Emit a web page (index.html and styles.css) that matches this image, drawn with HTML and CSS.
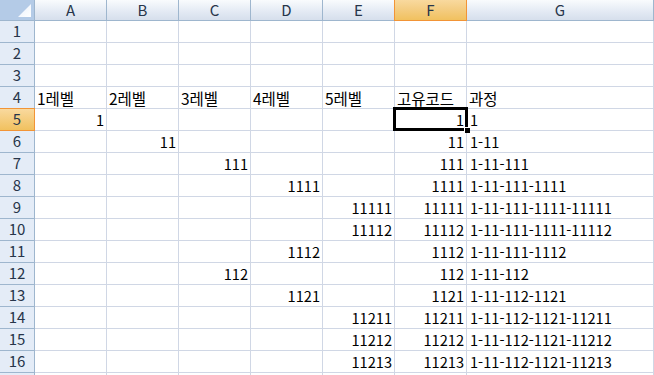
FILE: index.html
```html
<!DOCTYPE html>
<html lang="ko">
<head>
<meta charset="utf-8">
<link rel="stylesheet" href="styles.css">
</head>
<body>
<div class="wrap">
  <div class="sheet">
    <div class="corner"><span class="tri"></span></div>
    <div class="ch">A</div><div class="ch">B</div><div class="ch">C</div><div class="ch">D</div><div class="ch">E</div><div class="ch sel">F</div><div class="ch">G</div>

    <div class="rh">1</div><div class="c"></div><div class="c"></div><div class="c"></div><div class="c"></div><div class="c"></div><div class="c"></div><div class="c"></div>
    <div class="rh">2</div><div class="c"></div><div class="c"></div><div class="c"></div><div class="c"></div><div class="c"></div><div class="c"></div><div class="c"></div>
    <div class="rh">3</div><div class="c"></div><div class="c"></div><div class="c"></div><div class="c"></div><div class="c"></div><div class="c"></div><div class="c"></div>
    <div class="rh">4</div><div class="c k">1레벨</div><div class="c k">2레벨</div><div class="c k">3레벨</div><div class="c k">4레벨</div><div class="c k">5레벨</div><div class="c k">고유코드</div><div class="c k">과정</div>
    <div class="rh sel">5</div><div class="c n">1</div><div class="c"></div><div class="c"></div><div class="c"></div><div class="c"></div><div class="c n">1</div><div class="c">1</div>
    <div class="rh">6</div><div class="c"></div><div class="c n">11</div><div class="c"></div><div class="c"></div><div class="c"></div><div class="c n">11</div><div class="c">1-11</div>
    <div class="rh">7</div><div class="c"></div><div class="c"></div><div class="c n">111</div><div class="c"></div><div class="c"></div><div class="c n">111</div><div class="c">1-11-111</div>
    <div class="rh">8</div><div class="c"></div><div class="c"></div><div class="c"></div><div class="c n">1111</div><div class="c"></div><div class="c n">1111</div><div class="c">1-11-111-1111</div>
    <div class="rh">9</div><div class="c"></div><div class="c"></div><div class="c"></div><div class="c"></div><div class="c n">11111</div><div class="c n">11111</div><div class="c">1-11-111-1111-11111</div>
    <div class="rh">10</div><div class="c"></div><div class="c"></div><div class="c"></div><div class="c"></div><div class="c n">11112</div><div class="c n">11112</div><div class="c">1-11-111-1111-11112</div>
    <div class="rh">11</div><div class="c"></div><div class="c"></div><div class="c"></div><div class="c n">1112</div><div class="c"></div><div class="c n">1112</div><div class="c">1-11-111-1112</div>
    <div class="rh">12</div><div class="c"></div><div class="c"></div><div class="c n">112</div><div class="c"></div><div class="c"></div><div class="c n">112</div><div class="c">1-11-112</div>
    <div class="rh">13</div><div class="c"></div><div class="c"></div><div class="c"></div><div class="c n">1121</div><div class="c"></div><div class="c n">1121</div><div class="c">1-11-112-1121</div>
    <div class="rh">14</div><div class="c"></div><div class="c"></div><div class="c"></div><div class="c"></div><div class="c n">11211</div><div class="c n">11211</div><div class="c">1-11-112-1121-11211</div>
    <div class="rh">15</div><div class="c"></div><div class="c"></div><div class="c"></div><div class="c"></div><div class="c n">11212</div><div class="c n">11212</div><div class="c">1-11-112-1121-11212</div>
    <div class="rh">16</div><div class="c"></div><div class="c"></div><div class="c"></div><div class="c"></div><div class="c n">11213</div><div class="c n">11213</div><div class="c">1-11-112-1121-11213</div>
    <div class="rh"></div><div class="c"></div><div class="c"></div><div class="c"></div><div class="c"></div><div class="c"></div><div class="c"></div><div class="c"></div>
  </div>
  <div class="cursor"><span class="handle"></span></div>
</div>
</body>
</html>
```

FILE: styles.css
```css
html, body {
  margin: 0;
  padding: 0;
  background: #fff;
  overflow: hidden;
}
.wrap {
  position: relative;
  width: 654px;
  height: 375px;
  overflow: hidden;
}
.sheet {
  display: grid;
  grid-template-columns: 35px repeat(6, 72px) 187px;
  grid-template-rows: 21px;
  grid-auto-rows: 22px;
  font-family: "Noto Sans CJK KR", "Noto Sans", sans-serif;
  font-size: 14.6px;
  color: #000;
}
.sheet > div {
  box-sizing: border-box;
  border-right: 1px solid #d0d7e5;
  border-bottom: 1px solid #d0d7e5;
  overflow: visible;
  white-space: nowrap;
  line-height: 20px;
}
.corner {
  position: relative;
  background: #b4cbe7;
  border-right-color: #9eb6ce !important;
  border-bottom-color: #9eb6ce !important;
}
.tri {
  position: absolute;
  right: 3px;
  bottom: 3px;
  width: 13px;
  height: 13px;
  background: linear-gradient(135deg, #e8f0fb, #ffffff);
  clip-path: polygon(100% 0, 100% 100%, 0 100%);
}
.ch {
  background: linear-gradient(#f9fbfd, #e6ecf5 50%, #d6dfec);
  border-right-color: #9eb6ce !important;
  border-bottom-color: #9eb6ce !important;
  text-align: center;
  color: #27354a;
  font-size: 15px;
  line-height: 20px;
}
.ch.sel {
  background: linear-gradient(#f9d99e, #f4cc80 50%, #f1c15f);
  border-right-color: #f29436 !important;
  border-bottom-color: #f29436 !important;
  box-shadow: -1px 0 0 #f29436;
}
.rh {
  background: #e4ecf7;
  border-right-color: #9eb6ce !important;
  border-bottom-color: #9eb6ce !important;
  text-align: center;
  color: #27354a;
  font-size: 15px;
  line-height: 22px;
}
.rh.sel {
  background: linear-gradient(#f9d99e, #f1c15f);
  border-right-color: #f29436 !important;
  border-bottom-color: #f29436 !important;
  box-shadow: 0 -1px 0 #f29436;
}
.c {
  padding: 1px 2px 0 3px;
}
.c.k {
  font-size: 15.5px;
  padding-left: 2px;
}
.c.n {
  text-align: right;
}
.cursor {
  position: absolute;
  left: 393px;
  top: 107px;
  width: 75px;
  height: 24px;
  box-sizing: border-box;
  border: 3px solid #000;
}
.handle {
  position: absolute;
  right: -5px;
  bottom: -5px;
  width: 5px;
  height: 5px;
  background: #000;
  border: 1px solid #fff;
  border-width: 1px 0 0 1px;
}
```
